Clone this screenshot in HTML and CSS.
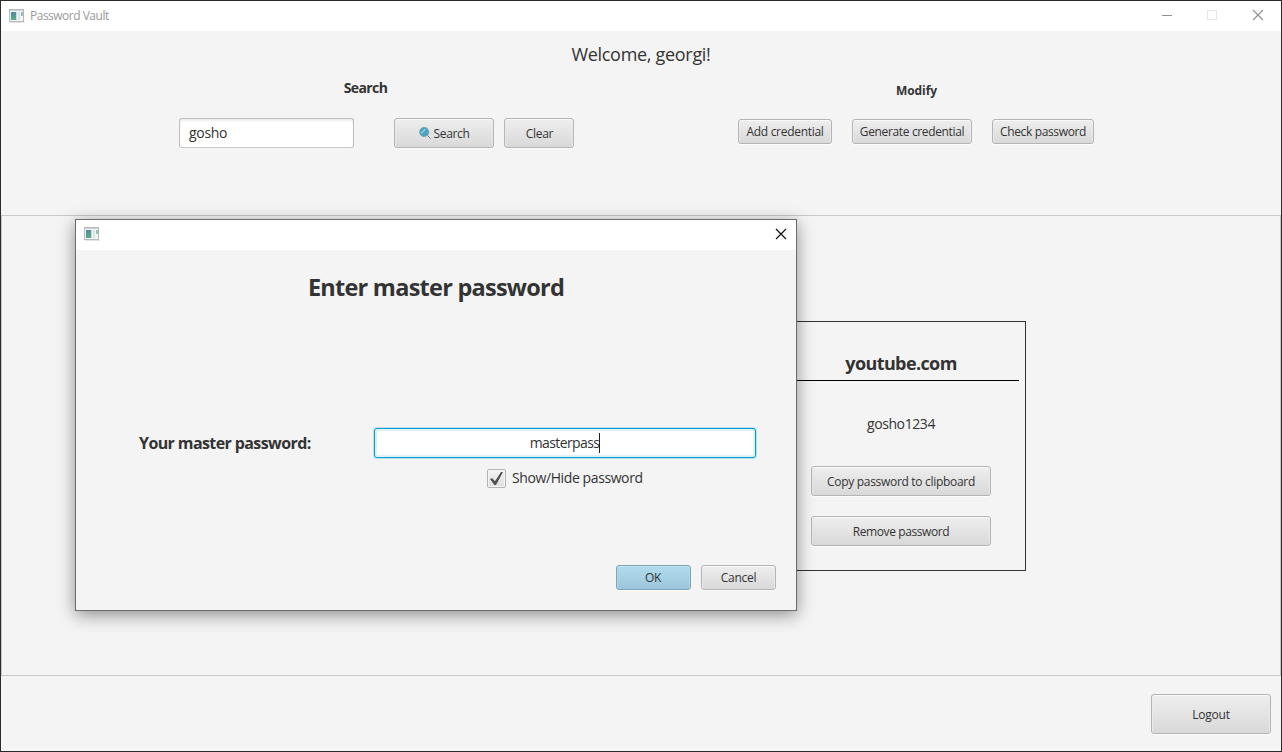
FILE: index.html
```
<!DOCTYPE html>
<html lang="en">
<head>
<meta charset="utf-8">
<title>Password Vault</title>
<link rel="stylesheet" href="styles.css">
</head>
<body>
<svg class="defs" aria-hidden="true">
  <defs>
    <linearGradient id="teal" x1="0" y1="0" x2="0.3" y2="1"><stop offset="0" stop-color="#4a86aa"/><stop offset="1" stop-color="#58ab84"/></linearGradient>
    <symbol id="app" viewBox="0 0 16 14">
      <rect x="0.5" y="0.5" width="14" height="12" fill="#f4f6f6" stroke="#b4babe"/>
      <path d="M1 1.5h13" stroke="#ccd2d7"/>
      <rect x="2" y="3" width="5" height="8" fill="url(#teal)"/>
      <path d="M7.5 3v8" stroke="#c7d8de"/>
      <rect x="9" y="3" width="2" height="8" fill="#dedfe2"/>
      <rect x="12" y="3" width="2" height="4" fill="#91bfb8"/>
      <path d="M1 13.5h15" stroke="#e2e4e5"/>
    </symbol>
  </defs>
</svg>
<div class="window">
  <div class="titlebar">
    <svg class="app-icon"><use href="#app"/></svg>
    <span class="window-title">Password Vault</span>
    <svg class="controls" width="103" height="12" viewBox="0 0 103 12" fill="none">
      <path d="M0 6.500h10" stroke="#8f8f8f"/>
      <rect x="45.500" y="1.500" width="9" height="9" stroke="#e6e6e6"/>
      <path d="M91 1l10 10M101 1l-10 10" stroke="#8f8f8f" stroke-width="1.100"/>
    </svg>
  </div>
  <header class="header">
    <div class="welcome"><span>Welcome, georgi!</span></div>
    <div class="tools">
      <section class="search">
        <h2 class="search-title">Search</h2>
        <div class="search-row">
          <div class="field"><span>gosho</span></div>
          <button class="btn find"><svg class="lens" viewBox="0 0 12 12"><circle cx="5.200" cy="5" r="4.700" fill="#4ba3bf" stroke="#7d98a3" stroke-width=".6"/><path d="M2.200 6.200L6.400 2" stroke="#8dd3e3" stroke-width="1.400"/><path d="M8.500 8.500l3 3" stroke="#718390"/></svg><span>Search</span></button>
          <button class="btn clear"><span>Clear</span></button>
        </div>
      </section>
      <section class="modify">
        <h2 class="modify-title">Modify</h2>
        <div class="modify-row">
          <button class="btn add"><span>Add credential</span></button>
          <button class="btn generate"><span>Generate credential</span></button>
          <button class="btn check"><span>Check password</span></button>
        </div>
      </section>
    </div>
  </header>
  <main class="results">
    <article class="card">
      <h3 class="site">youtube.com</h3>
      <div class="user">gosho1234</div>
      <button class="btn card-btn"><span class="copy">Copy password to clipboard</span></button>
      <button class="btn card-btn"><span class="remove">Remove password</span></button>
    </article>
  </main>
  <footer class="footer"><button class="btn logout"><span>Logout</span></button></footer>
</div>
<div class="dialog">
  <div class="dialog-bar">
    <svg class="app-icon"><use href="#app"/></svg>
    <svg width="12" height="12" viewBox="0 0 12 12"><path d="M1 1l10 10M11 1L1 11" stroke="#111" stroke-width="1.200"/></svg>
  </div>
  <h1 class="dialog-title">Enter master password</h1>
  <div class="password-row">
    <label class="password-label">Your master password:</label>
    <div class="password-field"><span>masterpass</span><i class="caret"></i></div>
  </div>
  <div class="toggle">
    <span class="checkbox"><svg width="13" height="13" viewBox="0 0 13 13"><path d="M0 7l2.200-.8L5 9.200 11 0H13L6 13H4.500Z" fill="#4f4f4f"/></svg></span>
    <span class="toggle-label">Show/Hide password</span>
  </div>
  <div class="actions">
    <button class="btn action ok"><span>OK</span></button>
    <button class="btn action cancel"><span>Cancel</span></button>
  </div>
</div>
</body>
</html>
```
FILE: styles.css
```
* { box-sizing: border-box; }
body { margin: 0; overflow: hidden; font-family: "Open Sans", "Noto Sans", sans-serif; font-size: 12px; color: #333; }
h1, h2, h3 { margin: 0; }
span, h1, h2, h3, label { white-space: nowrap; }
.defs { position: absolute; width: 0; height: 0; }
.window { width: 1282px; height: 752px; display: flex; flex-direction: column; border: 1px solid #2b2b2e; background: #f4f4f4; }
.titlebar { height: 30px; flex: none; display: flex; align-items: flex-start; padding: 8px 16px 0 8px; background: #fff; }
.app-icon { width: 16px; height: 14px; flex: none; }
.window-title { margin-left: 5px; line-height: 14px; color: #999; letter-spacing: -0.5px; }
.controls { margin-left: auto; }
.header { height: 184px; flex: none; }
.welcome { height: 48px; line-height: 46px; text-align: center; font-size: 18px; letter-spacing: -0.3px; }
.tools { display: flex; }
.search { margin-left: 178px; width: 395px; }
.search-title { width: 373px; height: 39px; line-height: 17px; font-size: 14px; text-align: center; letter-spacing: -0.6px; }
.search-row { display: flex; }
.modify { margin-left: 164px; width: 356px; }
.modify-title { width: 357px; height: 40px; line-height: 24px; font-size: 12px; text-align: center; letter-spacing: -0.1px; }
.modify-row { display: flex; gap: 20px; }
.btn { display: flex; align-items: center; justify-content: center; flex: none; padding: 0; font: inherit; color: #333; border: 1px solid #b4b4b4; border-radius: 3px; background: linear-gradient(#eee, #d9d9d9); box-shadow: inset 0 1px #fafafa, inset 1px 0 #eaeaea, inset -1px 0 #eaeaea, 0 1px #fcfcfc; letter-spacing: -0.3px; }
.field { width: 175px; height: 30px; margin-right: 40px; padding-left: 9px; line-height: 28px; font-size: 14px; background: #fff; border: 1px solid #bdbdbd; border-bottom-color: #c9c9c9; border-radius: 3px; box-shadow: inset 0 2px 2px #eee; letter-spacing: -0.3px; }
.find { width: 100px; height: 30px; margin-right: 10px; gap: 3px; letter-spacing: -0.35px; }
.lens { width: 12px; height: 12px; }
.clear { width: 70px; height: 30px; padding-left: 1px; }
.add { width: 94px; height: 25px; }
.generate { width: 120px; height: 25px; letter-spacing: -0.35px; }
.check { width: 102px; height: 25px; letter-spacing: -0.35px; }
.results { height: 461px; flex: none; padding: 105px 0 0 774px; border: 1px solid #c8c8c8; }
.card { width: 250px; height: 250px; padding: 0 6px; display: flex; flex-direction: column; align-items: center; border: 1px solid #333; }
.site { width: 100%; height: 59px; padding-top: 29px; line-height: 24px; border-bottom: 1px solid #000; text-align: center; font-size: 18px; letter-spacing: -0.6px; }
.user { height: 85px; line-height: 85px; font-size: 14px; letter-spacing: -0.4px; }
.card-btn { width: 180px; height: 30px; margin-bottom: 20px; }
.remove { letter-spacing: -0.4px; }
.footer { padding: 18px 10px; display: flex; justify-content: flex-end; }
.logout { width: 120px; height: 40px; letter-spacing: -0.2px; }
.dialog { position: absolute; left: 75px; top: 219px; width: 722px; height: 392px; border: 1px solid #6b6b6b; background: #f4f4f4; box-shadow: 0 4px 16px rgba(0,0,0,.42); }
.dialog-bar { height: 30px; padding: 0 9px 2px 8px; display: flex; align-items: center; justify-content: space-between; background: #fff; }
.dialog-title { height: 76px; line-height: 74px; text-align: center; font-size: 23.5px; letter-spacing: -0.75px; }
.password-row { display: flex; align-items: center; height: 30px; margin-top: 102px; padding-left: 63px; }
.password-label { width: 235px; font-size: 16px; font-weight: bold; letter-spacing: -0.6px; }
.password-field { width: 382px; height: 30px; display: flex; align-items: center; justify-content: center; padding-bottom: 1px; font-size: 14px; letter-spacing: -0.6px; background: #fff; border: 1px solid #039ed3; border-radius: 3px; box-shadow: 0 0 0 1px #b9e0ee, inset 0 0 0 2px #e0f2f8; }
.caret { width: 1px; height: 20px; background: #222; }
.toggle { display: flex; align-items: center; height: 20px; margin-top: 10px; padding-left: 411px; }
.checkbox { width: 19px; height: 19px; display: flex; align-items: center; justify-content: center; border: 1px solid #b4b4b4; border-radius: 2px; background: linear-gradient(#f3f3f3, #dedede); box-shadow: inset 0 0 0 1px #f5f5f5; }
.toggle-label { margin-left: 6px; padding-bottom: 1px; font-size: 14px; letter-spacing: -0.4px; }
.actions { display: flex; gap: 10px; justify-content: flex-end; margin-top: 77px; padding-right: 20px; }
.action { width: 75px; height: 25px; }
.ok { padding-right: 1px; border-color: #7aa5b9; background: linear-gradient(#b1dcee, #9bc5da); box-shadow: inset 0 1px #c5e5f1, inset 1px 0 #b4d8e7, inset -1px 0 #b4d8e7, 0 1px #fcfcfc; }
```
